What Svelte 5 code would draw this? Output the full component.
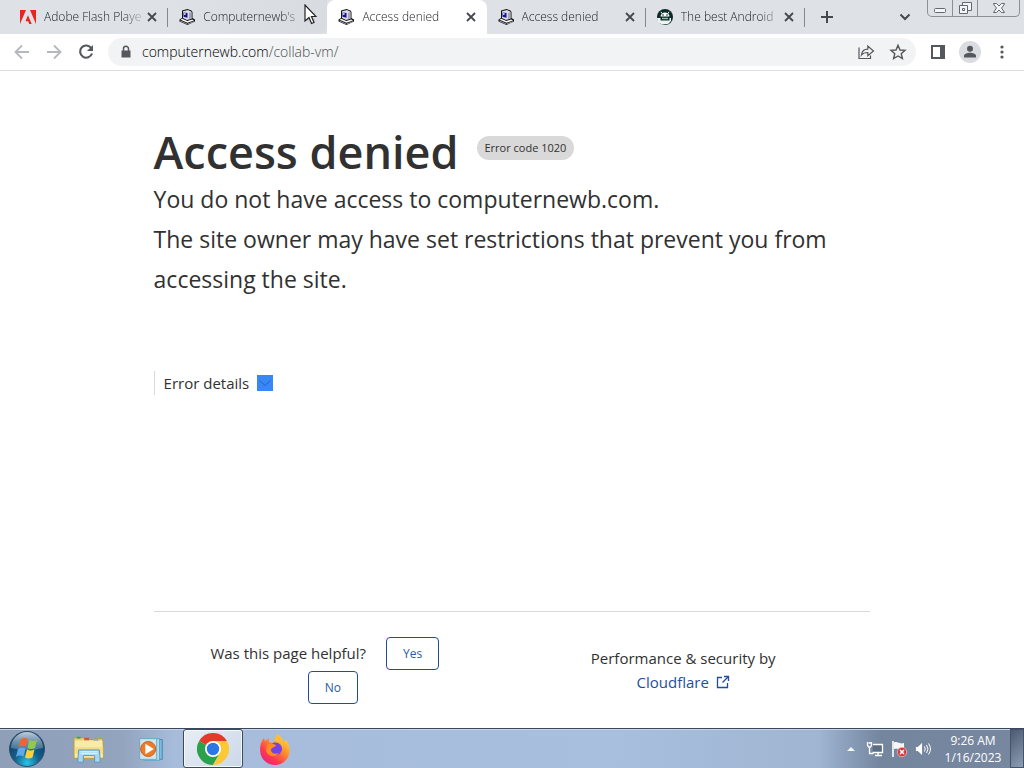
<script>
  const tabs = [
    { title: 'Adobe Flash Playe', icon: 'adobe' },
    { title: "Computernewb's", icon: 'pc', hovered: true },
    { title: 'Access denied', icon: 'pc', active: true },
    { title: 'Access denied', icon: 'pc' },
    { title: 'The best Android', icon: 'android' }
  ];
  let address = $state('computernewb.com/collab-vm/');
</script>

{#snippet pcIcon()}
  <svg class="favicon" viewBox="0 0 16 16" aria-hidden="true">
    <path d="M3 1.500 8.500 0 12.500 1.500 13.500 3v6l2.500 1.500v2L8.500 16 .500 12.500v-2L3 9z" fill="#111" />
    <path d="M4 2.300 9 .900 12.500 2.700v7L8 11 4 9z" fill="#dadae6" />
    <path d="M4.500 3.500 8.500 4v4.700L4.500 7.800z" fill="#15128f" />
    <path d="M5 4.300h1.600v1.500H5z" fill="#fff" />
    <path d="M10 4 12.500 3v6.400l-2.500 .800z" fill="#a5a5b6" />
    <path d="M1.500 10.700 3.300 9.800l5 2.200L13.200 10.400l1.800 1L8.500 13.800z" fill="#f6f6f9" />
    <path d="M1.300 11.600 8.500 14.700v.800L1.300 12.300zM9 14.500 15 12.200v.700L9 15.300z" fill="#b9b9c4" />
  </svg>
{/snippet}

<div class="desktop">
  <header class="browser">
    <div class="strip">
      <div class="tabs">
        {#each tabs as tab}
          <div class="tab" class:active={tab.active} class:hovered={tab.hovered}>
            {#if tab.icon === 'adobe'}
              <svg class="favicon" viewBox="0 0 16 16" aria-hidden="true">
                <path d="M0 1h6L0 15zM16 1h-6l6 14z" fill="#e8261c" />
                <path d="M8 6.200 11.700 15H9.300L8.200 12.200H5.500z" fill="#e8261c" />
              </svg>
            {:else if tab.icon === 'pc'}
              {@render pcIcon()}
            {:else}
              <svg class="favicon" viewBox="0 0 16 16" aria-hidden="true">
                <circle cx="8" cy="8" r="8" fill="#0a2b28" />
                <path d="M3.500 7.500a4.500 4 0 0 1 9 0z" fill="#fff" />
                <path d="M5 4.500 4 2.800M11 4.500 12 2.800" stroke="#fff" />
                <circle cx="6" cy="6" r=".8" fill="#0a2b28" /><circle cx="10" cy="6" r=".8" fill="#0a2b28" />
                <path d="M0 9h3.500v2.500h9V9H14v3l-3 3-6 .500-4-2.500z" fill="#eef4f2" />
                <path d="M5 9.500h6" stroke="#8db5a8" stroke-width="1.500" />
              </svg>
            {/if}
            <span class="title">{tab.title}</span>
            <button class="close" aria-label="Close tab">
              <svg viewBox="0 0 16 16"><path d="M4 4l8 8M12 4l-8 8" stroke="currentColor" stroke-width="1.800" /></svg>
            </button>
          </div>
        {/each}
      </div>
      <button class="new-tab" aria-label="New tab">
        <svg viewBox="0 0 16 16"><path d="M8 2v12M2 8h12" stroke="currentColor" stroke-width="2" /></svg>
      </button>
      <button class="search-tabs" aria-label="Search tabs">
        <svg viewBox="0 0 16 16"><path d="M3.500 5.500 8 10l4.500-4.500" fill="none" stroke="currentColor" stroke-width="2" /></svg>
      </button>
      <div class="window-controls">
        <button aria-label="Minimize">
          <svg viewBox="0 0 24 16"><rect x="6.500" y="8.500" width="11" height="4" rx="1" /></svg>
        </button>
        <button aria-label="Restore">
          <svg viewBox="0 0 24 16"><path d="M9.500 5.500v-3h9v8h-4M6.500 5.500h8v8h-8zM9.500 8.500h2v2h-2z" /></svg>
        </button>
        <button class="wide" aria-label="Close">
          <svg viewBox="0 0 24 16"><path d="M6.500 3.500h3L12 6l2.500-2.500h3l-.500 1.500-2.500 3 3 4.500h-3L12 10l-2.500 2.500h-3l3-4.500-2.500-3z" /></svg>
        </button>
      </div>
    </div>

    <div class="toolbar">
      <button class="tool faded" aria-label="Back">
        <svg viewBox="0 0 18 18"><path d="M16 9H3M9 2.500 2.500 9 9 15.500" fill="none" stroke="currentColor" stroke-width="1.800" /></svg>
      </button>
      <button class="tool faded" aria-label="Forward">
        <svg viewBox="0 0 18 18"><path d="M2 9h13M9 2.500 15.500 9 9 15.500" fill="none" stroke="currentColor" stroke-width="1.800" /></svg>
      </button>
      <button class="tool" aria-label="Reload">
        <svg viewBox="0 0 18 18"><path d="M14.300 5.200A6.100 6.100 0 1 0 15 10.500" fill="none" stroke="currentColor" stroke-width="2.100" /><path d="M16 2v6h-6z" fill="currentColor" /></svg>
      </button>
      <div class="omnibox">
        <svg class="lock" viewBox="0 0 16 16" aria-hidden="true"><path d="M3.500 6.500h9v7h-9z" fill="currentColor" /><path d="M5.500 7V4.800a2.500 2.500 0 0 1 5 0V7" fill="none" stroke="currentColor" stroke-width="1.500" /></svg>
        <label class="address">
          <span class="shown" aria-hidden="true">computernewb.com<span class="path">/collab-vm/</span></span>
          <input aria-label="Address and search bar" bind:value={address} />
        </label>
        <button class="tool" aria-label="Share this page">
          <svg viewBox="0 0 18 18" fill="none" stroke="currentColor" stroke-width="1.200"><path d="M2 4.500v11h11.500v-3" /><path d="M4.500 12c.500-4 3-5.800 6.300-5.800V3l5.700 5-5.700 4.800V9.500C8 9.500 6 10 4.500 12z" /></svg>
        </button>
        <button class="tool" aria-label="Bookmark this tab">
          <svg viewBox="0 0 18 18"><path d="M9 2.300 11 7l5 .400-3.800 3.300 1.200 4.900L9 13l-4.400 2.600 1.200-4.900L2 7.400 7 7z" fill="none" stroke="currentColor" stroke-width="1.400" /></svg>
        </button>
      </div>
      <button class="tool" aria-label="Side panel">
        <svg viewBox="0 0 18 18"><path d="M2 2h14v14H2zM4 4v10h7V4z" fill="currentColor" fill-rule="evenodd" /></svg>
      </button>
      <button class="tool avatar" aria-label="Profile">
        <svg viewBox="0 0 18 18" fill="currentColor"><circle cx="9" cy="5.800" r="3" /><path d="M3 14.500v-1.700c0-2 3.500-3 6-3s6 1 6 3v1.700z" /></svg>
      </button>
      <button class="tool" aria-label="Menu">
        <svg viewBox="0 0 18 18" fill="currentColor"><circle cx="9" cy="4" r="1.600" /><circle cx="9" cy="9" r="1.600" /><circle cx="9" cy="14" r="1.600" /></svg>
      </button>
    </div>
    <svg class="cursor" viewBox="0 0 14 22" aria-hidden="true"><path d="M2 1v16l4-3.500 2.500 6 2.500-1-2.500-6H13z" fill="#fff" stroke="#222" stroke-width="1.200" /></svg>
  </header>

  <main>
    <div class="heading">
      <h1>Access denied</h1>
      <span class="badge">Error code 1020</span>
    </div>
    <p class="lead">You do not have access to computernewb.com.</p>
    <p class="lead">The site owner may have set restrictions that prevent you from accessing the site.</p>
    <button class="details">
      Error details
      <svg viewBox="0 0 16 16" aria-hidden="true"><path d="M0 0h16v16H0z" fill="#3788f5" /><path d="M2.500 5.500 8 10.500l5.500-5" fill="none" stroke="#2567c4" /></svg>
    </button>
    <footer>
      <div class="feedback">
        <span>Was this page helpful?</span>
        <button class="yes">Yes</button>
        <button>No</button>
      </div>
      <div class="credit">
        <div>Performance &amp; security by</div>
        <a href="#cloudflare">Cloudflare
          <svg viewBox="0 0 14 14" aria-hidden="true"><path d="M6 2.500H1.500v10h10V8M8 1.500h4.500V6M12.500 1.500 6.500 7.500" fill="none" stroke="currentColor" stroke-width="1.300" /></svg>
        </a>
      </div>
    </footer>
  </main>

  <nav class="taskbar" aria-label="Taskbar">
    <button class="start" aria-label="Start">
      <svg viewBox="0 0 38 38">
        <defs>
          <radialGradient id="orb" cx=".5" cy=".9" r=".8"><stop offset="0" stop-color="#2cc4ea" /><stop offset=".45" stop-color="#12608c" /><stop offset="1" stop-color="#123a5c" /></radialGradient>
          <linearGradient id="gloss" x2="0" y2="1"><stop offset="0" stop-color="#dce9f3" stop-opacity=".85" /><stop offset="1" stop-color="#8eb4d0" stop-opacity=".35" /></linearGradient>
        </defs>
        <circle cx="19" cy="19" r="17.500" fill="url(#orb)" stroke="#314e68" />
        <path d="M3 18a16 16 0 0 1 32 0q-16 4-32 0z" fill="url(#gloss)" />
        <path d="M12.500 9.500q4-2.500 7.500-.500l-2 8q-4-2-7.500.500z" fill="#ed6535" />
        <path d="M21.500 10q3.500 2 7.500 0l-2 8q-4 2-7.500 0z" fill="#94c84c" />
        <path d="M10 19q4-2.500 7.500-.500l-2 8q-4-2-7.500.500z" fill="#5eaae6" />
        <path d="M19 19.500q3.500 2 7.500 0l-2 8q-4 2-7.500 0z" fill="#fbd043" />
      </svg>
    </button>
    <button class="app" aria-label="File Explorer">
      <svg viewBox="0 0 34 32">
        <path d="M1 4h10l2 2h9l1-1h8l1 3v18H1z" fill="#e8cf76" stroke="#b99b48" />
        <path d="M4 3h4v2H4z" fill="#43a347" /><path d="M12 4h5v3h-5z" fill="#db5238" /><path d="M22 6h5v2h-5z" fill="#4a90cf" />
        <path d="M2 7h29l1 18H2z" fill="#f8eaa7" /><path d="M2 14h30v7H2z" fill="#f2dc86" />
        <path d="M6 17h22l1 13h-6v-7H11v7H5z" fill="#a4d8f0" stroke="#5698c0" />
        <path d="M8 19h18M8 21h18" stroke="#e4f7ff" />
      </svg>
    </button>
    <button class="app" aria-label="Media Player">
      <svg viewBox="0 0 34 32">
        <path d="M12 6h17v21H12z" fill="#80b9d8" stroke="#4288b0" /><path d="M9 5h17v23H9z" fill="#b6dcef" stroke="#5aa1c6" /><path d="M5 5h18v22H5z" fill="#d1e5ee" stroke="#69a6c4" />
        <circle cx="14" cy="16" r="8" fill="#ee7c27" stroke="#c95d19" /><path d="M11 10.500 20 16l-9 5.500z" fill="#fff" />
      </svg>
    </button>
    <button class="app open" aria-label="Chrome">
      <svg viewBox="0 0 32 32">
        <path d="M16 16 2.140 8A16 16 0 0 1 29.860 8z" fill="#e23b2e" />
        <path d="M16 16 2.140 8A16 16 0 0 0 16 32l7-12z" fill="#2ba14b" />
        <path d="M16 8h13.860A16 16 0 0 1 16 32l7-12z" fill="#fcc934" />
        <circle cx="16" cy="16" r="8" fill="#fff" /><circle cx="16" cy="16" r="6.200" fill="#2b77e5" />
      </svg>
    </button>
    <button class="app" aria-label="Firefox">
      <svg viewBox="0 0 32 32">
        <defs><linearGradient id="fox" x1="1" x2="0.200" y2="1"><stop offset="0" stop-color="#fff04f" /><stop offset=".4" stop-color="#ff9a2b" /><stop offset=".75" stop-color="#ff3750" /><stop offset="1" stop-color="#e5207f" /></linearGradient></defs>
        <path d="M18 1c4 2 6 5 7 8l2-2c3 4 4 8 3.500 12A14.700 14.700 0 0 1 1.200 18C.800 13 2 8 5 5l1 3 4-3v4l4 1C16 7 16 4 18 1z" fill="url(#fox)" />
        <circle cx="16.500" cy="16" r="6.500" fill="#7542e5" />
        <path d="M8 12c3-2 6-1 9 0-1 3-5 2-5 5s4 5 8 3c-3 5-12 4-13-3z" fill="#ff8a20" />
        <path d="M16 9c4-1 8 2 8 7 1-6-2-10-8-12z" fill="#ffbe32" />
      </svg>
    </button>
    <div class="tray">
      <button aria-label="Show hidden icons"><svg viewBox="0 0 18 18"><path d="M5 11 9 7l4 4z" fill="#f4f7fa" /></svg></button>
      <button aria-label="Network"><svg viewBox="0 0 18 18"><path d="M7 4.500h9.500v8H6.500" fill="#5c6e85" stroke="#fff" stroke-width="1.300" /><path d="M9 15.500h7M12 13v2M3.500 8v5.500h4M1.500 2v3l1 2h2l1-2V2M2.500 3h3" fill="none" stroke="#fff" stroke-width="1.300" /></svg></button>
      <button aria-label="Action Center"><svg viewBox="0 0 18 18"><path d="M3 1v16" stroke="#fff" stroke-width="1.600" /><path d="M4 2.500c4-1.500 5 2 10 .500V9c-4 1.500-6-1-10 0z" fill="#f5f7f9" /><circle cx="12" cy="12" r="4.700" fill="#d83a3c" stroke="#f8d8d8" stroke-width=".6" /><path d="M10 10l4 4M14 10l-4 4" stroke="#fff" stroke-width="1.500" /></svg></button>
      <button aria-label="Volume"><svg viewBox="0 0 18 18"><path d="M1.500 6.500H4L8.500 2v14L4 11.500H1.500z" fill="#fff" stroke="#586c83" stroke-width=".6" /><path d="M10.500 6.500q1.500 2.500 0 5M12.500 5q3 4 0 8M14.500 3.500q4 5.500 0 11" fill="none" stroke="#fff" /></svg></button>
      <div class="clock"><span>9:26 AM</span><span>1/16/2023</span></div>
      <button class="show-desktop" aria-label="Show desktop"></button>
    </div>
  </nav>
</div>

<style>
  :global(body) { background: #fff; }
  * { box-sizing: border-box; }
  button { font: inherit; color: inherit; border: 0; padding: 0; background: none; }
  svg { display: block; }
  .desktop {
    min-height: 100vh; display: flex; flex-direction: column;
    font-family: "Open Sans", "Noto Sans", sans-serif; color: #313131;
  }
  .browser { position: relative; border-bottom: 1px solid #dcdee0; font-weight: 300; }
  .strip { display: flex; align-items: center; height: 34px; padding: 0 4px 0 9px; background: #dee1e6; color: #45484d; }
  .tabs { display: flex; flex: 0 1 796px; min-width: 0; height: 34px; }
  .tab {
    position: relative; flex: 1 1 0; min-width: 0; display: flex; align-items: center; gap: 8px;
    padding: 0 8px 0 11px; font-size: 12px; line-height: 16px; color: #202225;
  }
  .tab::after { content: ""; position: absolute; right: 0; top: 8px; width: 1px; height: 19px; background: #85888d; }
  .tab.hovered::after, .tab.active::after { display: none; }
  .tab.active { background: #fff; border-radius: 8px 8px 0 0; }
  .tab.hovered { background: linear-gradient(90deg, #dee1e6, #d8dbe0); border-radius: 0 0 8px 0; }
  .tab.hovered .close { opacity: 0.15; }
  .favicon { flex: none; width: 16px; height: 16px; }
  .title {
    flex: 1; min-width: 0; overflow: hidden; white-space: nowrap;
    mask-image: linear-gradient(90deg, #000 80%, rgb(0 0 0 / 0.2));
  }
  .close, .close svg { flex: none; width: 16px; height: 16px; }
  .close { margin-left: -6px; color: #45484d; }
  .new-tab { flex: none; margin-left: 14px; }
  .new-tab svg, .search-tabs svg { width: 16px; height: 16px; }
  .search-tabs { margin-left: auto; margin-right: 14px; }
  .window-controls { align-self: flex-start; display: flex; height: 17px; border: 1px solid #8b8f96; border-top: 0; border-radius: 0 0 5px 5px; }
  .window-controls button { width: 25px; border-right: 1px solid #8b8f96; }
  .window-controls .wide { width: 41px; border: 0; }
  .window-controls svg { width: 24px; height: 16px; margin: auto; fill: #f4f5f7; stroke: #64686f; }
  .toolbar { display: flex; align-items: center; gap: 4px; height: 36px; padding: 0 8px; background: #fff; color: #54575c; }
  .tool { flex: none; width: 28px; height: 28px; border-radius: 50%; }
  .tool svg { width: 18px; height: 18px; margin: auto; }
  .faded { color: #b6b8bb; }
  .omnibox {
    flex: 1; min-width: 0; display: flex; align-items: center; gap: 4px; height: 28px;
    margin: 0 4px; padding: 0 4px 0 6px; border-radius: 14px; background: #f1f3f4;
  }
  .lock { flex: none; width: 16px; height: 16px; margin: 0 4px; }
  .address { position: relative; flex: 1; min-width: 0; font-size: 14px; line-height: 20px; }
  .shown { color: #000; white-space: nowrap; }
  .path { color: #4a4d52; }
  .address input {
    position: absolute; inset: 0; width: 100%; padding: 0; border: 0; outline: 0;
    background: none; font: inherit; color: transparent;
  }
  .avatar { width: 22px; height: 22px; margin: 0 3px; background: #d9dde2; }
  .cursor { position: absolute; left: 303px; top: 4px; width: 14px; height: 22px; }

  main { flex: 1; padding: 54px 15% 16px; }
  .heading { display: flex; align-items: center; gap: 18px; }
  h1 { margin: 0; font-size: 45px; line-height: 54px; font-weight: 600; }
  .badge { margin-top: -8px; padding: 0 8px; border-radius: 12px; background: #d9d9d9; font-size: 11px; line-height: 24px; }
  .lead { margin: 0; font-size: 23px; line-height: 40px; }
  .details {
    display: flex; align-items: center; gap: 8px; margin-top: 72px; padding-left: 9px;
    border-left: 1px solid #d9d9d9; font-size: 15px; line-height: 24px;
  }
  .details svg { width: 16px; height: 16px; }
  footer { display: grid; grid-template-columns: 1fr 1fr; margin-top: 216px; padding-top: 24px; border-top: 1px solid #d9d9d9; font-size: 15px; }
  .feedback { padding: 0 48px; text-align: center; line-height: 34px; }
  .feedback button {
    height: 33px; margin-top: 1px; padding: 0 16px; border: 1px solid #1f4f91; border-radius: 4px;
    color: #2c5ba0; font-size: 12px; line-height: 31px; vertical-align: top;
  }
  .feedback .yes { margin: 1px 16px 0; }
  .credit { padding: 10px 16px 0 0; text-align: center; line-height: 24px; }
  .credit a { display: inline-flex; align-items: center; gap: 7px; color: #1f4f9c; text-decoration: none; }
  .credit svg { width: 14px; height: 14px; }

  .taskbar {
    display: flex; height: 40px; border-top: 1px solid #39485c;
    box-shadow: inset 0 1px #c7d6e8;
    background: linear-gradient(90deg, #8f9fb8, #93a4bf 12%, #a6bcda 17%, #a8bfdd 60%, #9fb5d2 80%, #74859e 86%, #77879f);
  }
  .start { width: 38px; margin: 0 13px 0 8px; }
  .start svg { width: 38px; height: 38px; }
  .app { width: 60px; border: 1px solid transparent; border-radius: 3px; }
  .app + .app { margin-left: 2px; }
  .app svg { width: 32px; height: 32px; margin: auto; }
  .app.open { border-color: #3b4a5e; background: linear-gradient(135deg, #e8eef5, #cbd8e8); box-shadow: inset 0 0 0 1px #f6f9fc; }
  .tray { display: flex; align-items: center; gap: 6px; margin-left: auto; color: #fff; }
  .tray svg { width: 18px; height: 18px; }
  .clock { display: flex; flex-direction: column; width: 66px; margin-left: 2px; text-align: center; font-size: 12px; line-height: 17px; }
  .show-desktop { align-self: stretch; width: 14px; margin-left: -2px; border: 1px solid #43536a; background: linear-gradient(135deg, #4b5a70, #8d9db3); }
</style>
